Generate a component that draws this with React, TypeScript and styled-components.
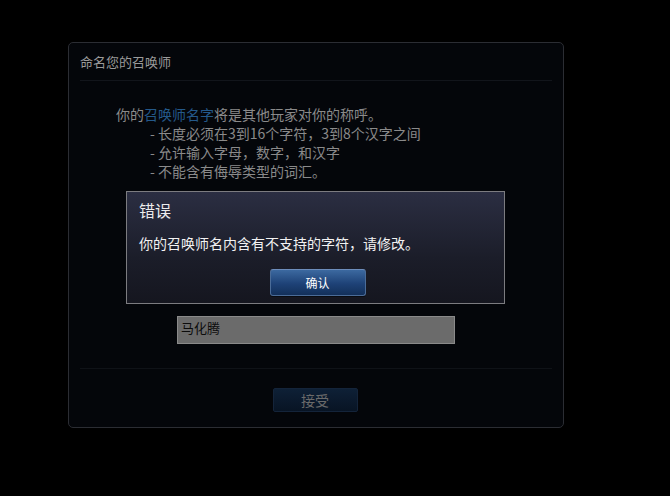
import React from 'react';
import styled, { createGlobalStyle } from 'styled-components';

const Global = createGlobalStyle`
  html, body {
    margin: 0;
    padding: 0;
    background: #000;
  }
  body {
    font-family: "Noto Sans CJK SC", "Noto Sans", sans-serif;
    width: 670px;
    height: 496px;
    overflow: hidden;
  }
`;

const Stage = styled.div`
  position: relative;
  width: 670px;
  height: 496px;
  padding: 42px 0 0 68px;
  box-sizing: border-box;
`;

const Panel = styled.div`
  width: 496px;
  height: 386px;
  box-sizing: border-box;
  border: 1px solid #2b2d33;
  border-radius: 5px;
  background: #04060a;
  display: flex;
  flex-direction: column;
  padding: 0 11px;
`;

const Header = styled.div`
  height: 37px;
  display: flex;
  align-items: center;
  color: #9a9a9a;
  font-size: 13px;
`;

const Divider = styled.div`
  height: 1px;
  background: #12151b;
`;

const Intro = styled.div`
  margin: 24px 0 0 36px;
  color: #8a8a8a;
  font-size: 14px;
  line-height: 19px;
`;

const Hl = styled.span`
  color: #24598a;
`;

const Rule = styled.div`
  padding-left: 34px;
`;

const NameInput = styled.div`
  margin: 135px 0 0 97px;
  width: 278px;
  height: 28px;
  box-sizing: border-box;
  background: #6b6b6b;
  border: 1px solid #8a8a8a;
  color: #0c0c0c;
  font-size: 13px;
  line-height: 18px;
  padding: 2px 3px;
`;

const Footer = styled.div`
  margin-top: 24px;
  border-top: 1px solid #0f1217;
  display: flex;
  justify-content: center;
  padding-top: 19px;
  padding-right: 2px;
`;

const AcceptButton = styled.div`
  width: 85px;
  height: 24px;
  box-sizing: border-box;
  border: 1px solid #14243a;
  border-radius: 2px;
  background: linear-gradient(#0e2036, #081424);
  color: #6a6a6a;
  font-size: 14px;
  display: flex;
  align-items: center;
  justify-content: center;
`;

const Dialog = styled.div`
  position: absolute;
  left: 126px;
  top: 191px;
  width: 379px;
  height: 113px;
  box-sizing: border-box;
  border: 1px solid #7c7c80;
  background: linear-gradient(#2b2e42, #1b1d29 60%, #15161f);
  padding: 0 12px;
  display: flex;
  flex-direction: column;
`;

const DialogTitle = styled.div`
  color: #ececec;
  font-size: 16px;
  line-height: 20px;
  margin-top: 8px;
`;

const DialogText = styled.div`
  color: #f2f2f2;
  font-size: 14px;
  line-height: 20px;
  margin-top: 13px;
`;

const ConfirmRow = styled.div`
  display: flex;
  justify-content: center;
  margin-top: 16px;
  padding-left: 4px;
`;

const ConfirmButton = styled.div`
  width: 96px;
  height: 27px;
  box-sizing: border-box;
  border: 1px solid #4b6c98;
  border-top-color: #6d8dbb;
  border-radius: 3px;
  background: linear-gradient(#3c69a0, #1e4277 55%, #13305a);
  color: #fff;
  font-size: 12px;
  display: flex;
  align-items: center;
  justify-content: center;
  box-shadow: 0 1px 0 #0a0c12;
`;

export default function App() {
  return (
    <>
      <Global />
      <Stage>
        <Panel>
          <Header>命名您的召唤师</Header>
          <Divider />
          <Intro>
            <div>
              你的<Hl>召唤师名字</Hl>将是其他玩家对你的称呼。
            </div>
            <Rule>- 长度必须在3到16个字符，3到8个汉字之间</Rule>
            <Rule>- 允许输入字母，数字，和汉字</Rule>
            <Rule>- 不能含有侮辱类型的词汇。</Rule>
          </Intro>
          <NameInput>马化腾</NameInput>
          <Footer>
            <AcceptButton>接受</AcceptButton>
          </Footer>
        </Panel>
        <Dialog>
          <DialogTitle>错误</DialogTitle>
          <DialogText>你的召唤师名内含有不支持的字符，请修改。</DialogText>
          <ConfirmRow>
            <ConfirmButton>确认</ConfirmButton>
          </ConfirmRow>
        </Dialog>
      </Stage>
    </>
  );
}
